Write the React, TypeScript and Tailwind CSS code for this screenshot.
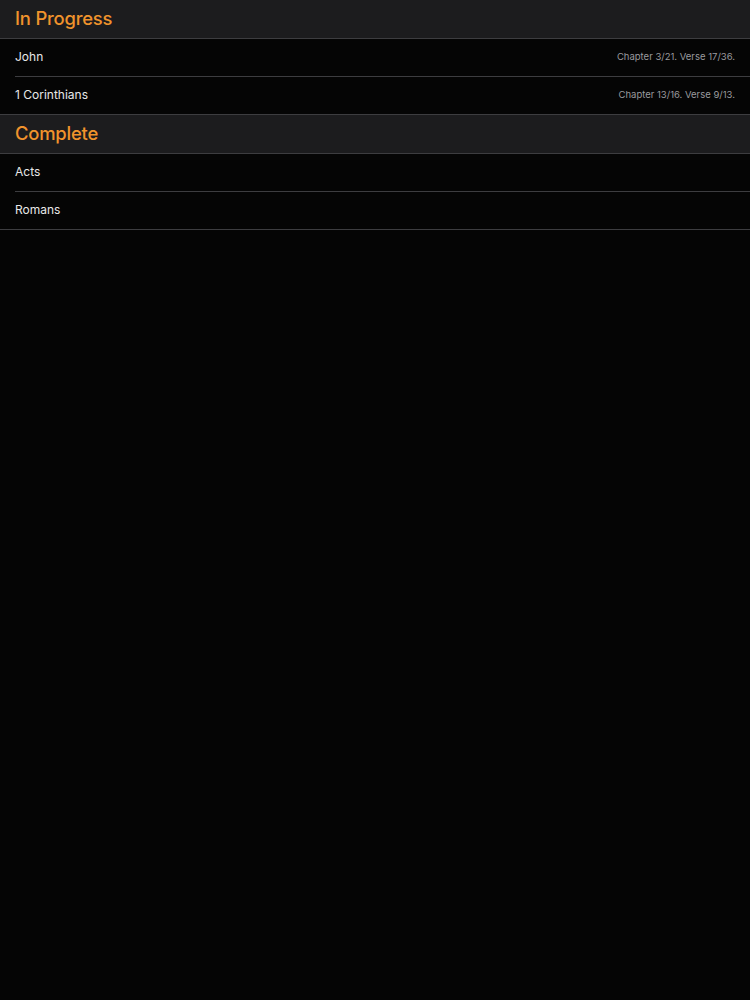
import React from "react";

type Row = { name: string; detail?: string };

const sections: { title: string; rows: Row[] }[] = [
  {
    title: "In Progress",
    rows: [
      { name: "John", detail: "Chapter 3/21. Verse 17/36." },
      { name: "1 Corinthians", detail: "Chapter 13/16. Verse 9/13." },
    ],
  },
  {
    title: "Complete",
    rows: [{ name: "Acts" }, { name: "Romans" }],
  },
];

export default function App() {
  return (
    <div
      className="min-h-[1000px] w-full bg-[#050505]"
      style={{ fontFamily: "Inter, 'Liberation Sans', Arial, sans-serif" }}
    >
      {sections.map((s) => (
        <div key={s.title}>
          <div className="h-[38.5px] bg-[#1c1c1e] border-b border-[#3d3d40] flex items-center px-[15px]">
            <span className="text-[18.4px] font-medium text-[#f0932c] tracking-[-0.2px]">{s.title}</span>
          </div>
          {s.rows.map((r, i) => (
            <div key={r.name} className={i === s.rows.length - 1 ? "border-b border-[#3d3d40]" : ""}>
              <div
                className={
                  "ml-[15px] pr-[15px] flex items-center justify-between " +
                  (i === s.rows.length - 1 ? "h-[37.5px]" : "h-[38px] border-b border-[#3d3d40]")
                }
              >
                <span className="text-[12px] text-[#e8e8e8]">{r.name}</span>
                {r.detail && <span className="text-[9.5px] text-[#9a9a9e]">{r.detail}</span>}
              </div>
            </div>
          ))}
        </div>
      ))}
    </div>
  );
}
